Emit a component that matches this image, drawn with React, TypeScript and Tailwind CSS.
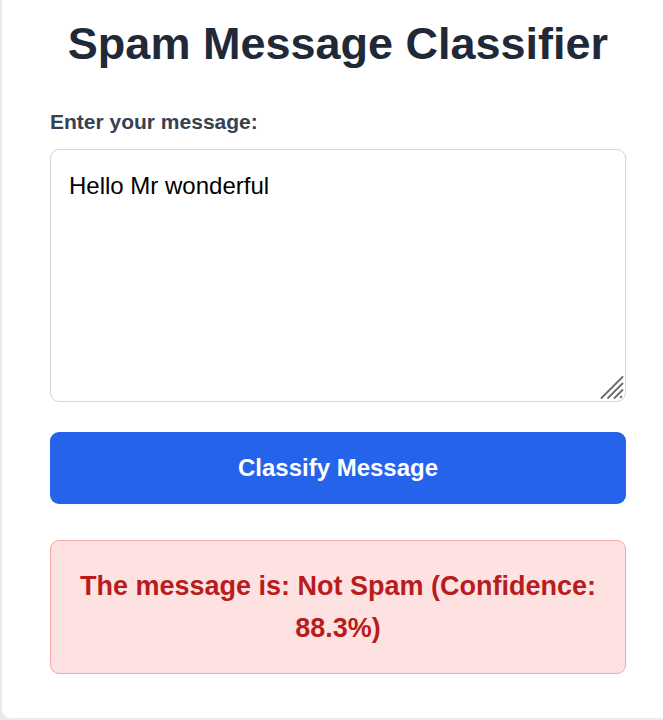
import React, { useState } from "react";

export default function App() {
  const [msg, setMsg] = useState("Hello Mr wonderful");
  return (
    <div
      className="w-full h-[720px] overflow-hidden bg-[#ebebeb]"
      style={{ fontFamily: '"Liberation Sans", Arial, sans-serif' }}
    >
      <div className="ml-[2px] w-[672px] h-[718px] bg-white rounded-b-[9px] px-[48px] pt-[17px]">
        <h1 className="text-[45px] leading-[54px] font-bold text-center text-[#1f2937] mb-[36px]">
          Spam Message Classifier
        </h1>
        <label className="block text-[21px] leading-[30px] font-bold text-[#374151] mb-[12px]">
          Enter your message:
        </label>
        <div className="relative">
          <textarea
            value={msg}
            onChange={(e) => setMsg(e.target.value)}
            className="block w-full h-[253px] resize-none border border-[#d1d5db] rounded-[9px] p-[18px] text-[24px] leading-[36px] text-black outline-none"
          />
          <svg
            className="absolute right-[2px] bottom-[2px] pointer-events-none"
            width="24"
            height="24"
            viewBox="0 0 24 24"
          >
            <g stroke="#6b6b6b" strokeWidth="1.8" strokeLinecap="round">
              <line x1="1.5" y1="22" x2="22.5" y2="1" />
              <line x1="8" y1="22" x2="22.5" y2="7.5" />
              <line x1="14.5" y1="22" x2="22.5" y2="14" />
            </g>
            <circle cx="21" cy="21" r="1.2" fill="#6b6b6b" />
          </svg>
        </div>
        <button className="mt-[30px] w-full h-[72px] rounded-[9px] bg-[#2563eb] text-white font-bold text-[24px] leading-[36px]">
          Classify Message
        </button>
        <div className="mt-[36px] border border-[#fca5a5] bg-[#fee2e2] rounded-[9px] p-[24px] text-center text-[27px] leading-[42px] font-bold text-[#b91c1c]">
          The message is: Not Spam (Confidence: 88.3%)
        </div>
      </div>
    </div>
  );
}
